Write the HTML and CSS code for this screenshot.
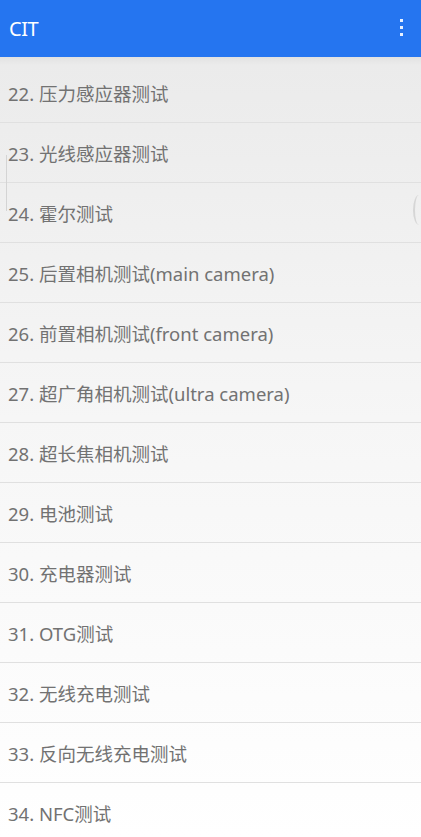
FILE: index.html
```html
<!DOCTYPE html>
<html lang="zh-CN">
<head>
  <meta charset="UTF-8">
  <title>CIT</title>
  <meta name="viewport" content="width=device-width, initial-scale=1.0">
  <link rel="stylesheet" href="styles.css">
</head>
<body>

  <!-- Toolbar -->
  <div class="toolbar">
    <span class="title">CIT</span>
    <span class="menu">
      <i></i><i></i><i></i>
    </span>
  </div>

  <!-- Test list -->
  <div class="list">
    <div class="item">22. 压力感应器测试</div>
    <div class="item">23. 光线感应器测试</div>
    <div class="item">24. 霍尔测试</div>
    <div class="item">25. 后置相机测试(main camera)</div>
    <div class="item">26. 前置相机测试(front camera)</div>
    <div class="item">27. 超广角相机测试(ultra camera)</div>
    <div class="item">28. 超长焦相机测试</div>
    <div class="item">29. 电池测试</div>
    <div class="item">30. 充电器测试</div>
    <div class="item">31. OTG测试</div>
    <div class="item">32. 无线充电测试</div>
    <div class="item">33. 反向无线充电测试</div>
    <div class="item">34. NFC测试</div>
  </div>

  <div class="edge-left"></div>
  <div class="edge-right"></div>

</body>
</html>
```

FILE: styles.css
```css
body {
  margin: 0;
  font-family: "Noto Sans", "Noto Sans CJK SC", sans-serif;
  background: linear-gradient(#e9e9e9, #f6f6f6 50%, #ffffff);
  color: #727272;
  height: 837px;
  overflow: hidden;
  position: relative;
}

.toolbar {
  height: 57px;
  background: #2575f0;
  display: flex;
  align-items: center;
  justify-content: space-between;
  padding: 0 18px 0 9px;
}

.title {
  color: #fff;
  font-size: 20px;
  letter-spacing: -0.5px;
}

.menu {
  display: flex;
  flex-direction: column;
  gap: 4px;
  margin-top: -2px;
}

.menu i {
  width: 3px;
  height: 3px;
  background: #e8f1ff;
}

.list {
  padding-top: 6px;
  background: linear-gradient(rgba(0,0,0,0.04), rgba(0,0,0,0) 8px);
}

.item {
  height: 60px;
  box-sizing: border-box;
  display: flex;
  align-items: center;
  padding: 0 0 0 8px;
  font-size: 18.5px;
  border-bottom: 1px solid #e0e0e0;
  white-space: nowrap;
}

.edge-left {
  position: absolute;
  left: 6px;
  top: 155px;
  width: 1px;
  height: 56px;
  background: #d4d4d4;
}

.edge-right {
  position: absolute;
  right: -4px;
  top: 195px;
  width: 10px;
  height: 30px;
  border-left: 2px solid #d6d6d6;
  border-radius: 50%;
}
```
